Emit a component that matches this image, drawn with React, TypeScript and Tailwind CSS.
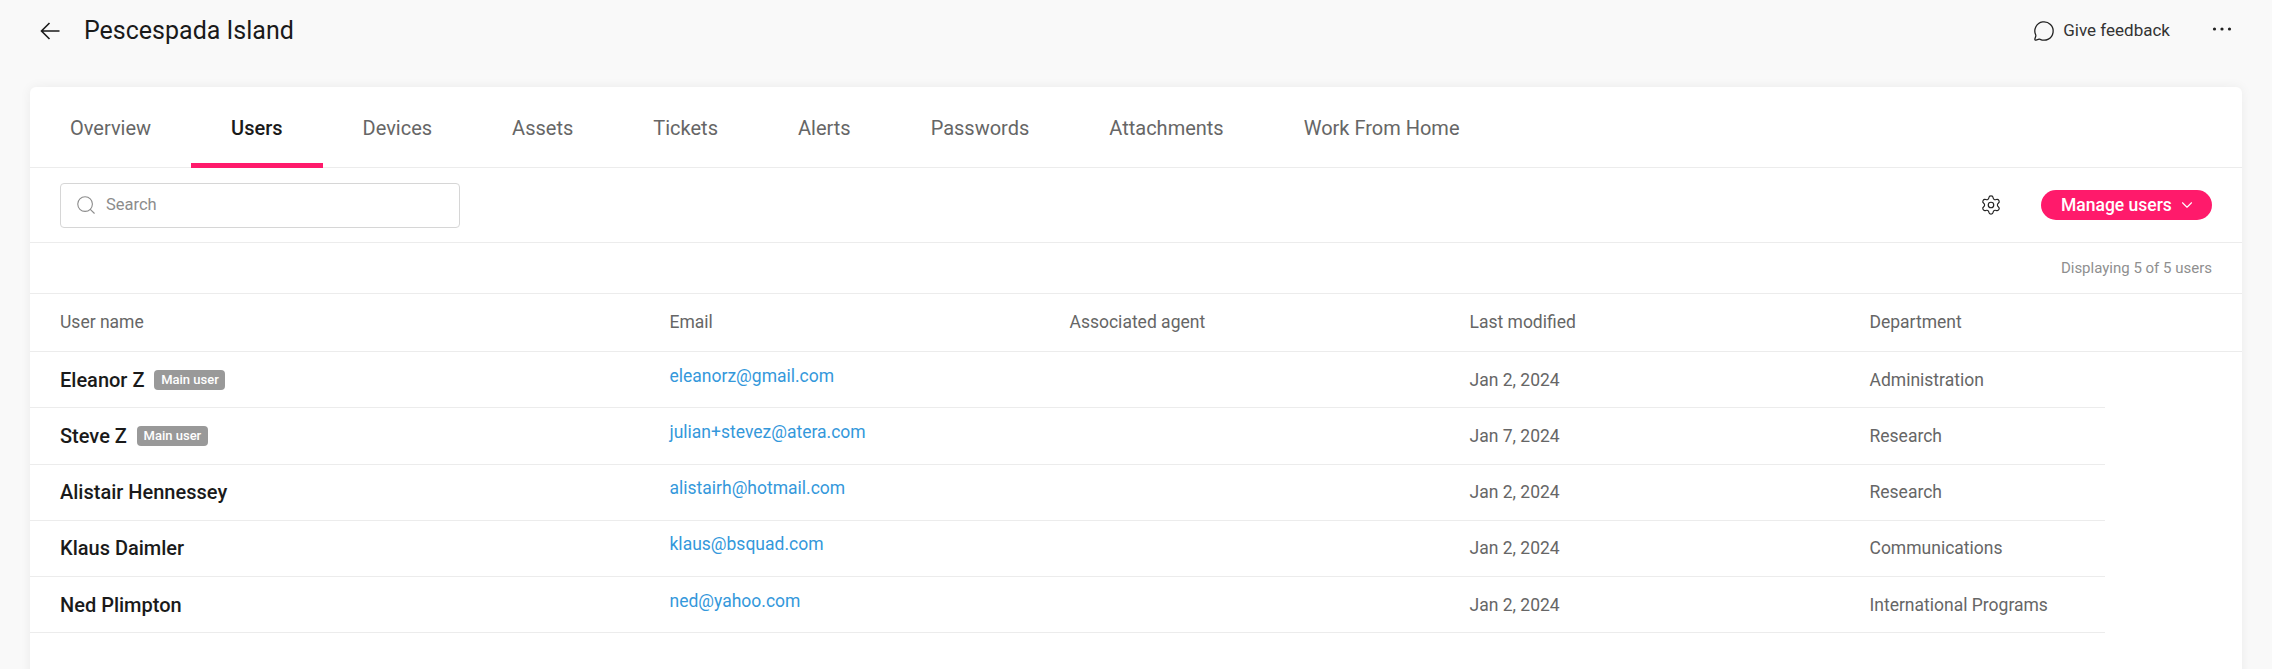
import React from "react";
import { ChevronDown, MessageCircle, Search, Settings } from "lucide-react";

const tabs = ["Overview", "Users", "Devices", "Assets", "Tickets", "Alerts", "Passwords", "Attachments", "Work From Home"];

const users = [
  { name: "Eleanor Z", main: true, email: "eleanorz@gmail.com", modified: "Jan 2, 2024", department: "Administration" },
  { name: "Steve Z", main: true, email: "julian+stevez@atera.com", modified: "Jan 7, 2024", department: "Research" },
  { name: "Alistair Hennessey", main: false, email: "alistairh@hotmail.com", modified: "Jan 2, 2024", department: "Research" },
  { name: "Klaus Daimler", main: false, email: "klaus@bsquad.com", modified: "Jan 2, 2024", department: "Communications" },
  { name: "Ned Plimpton", main: false, email: "ned@yahoo.com", modified: "Jan 2, 2024", department: "International Programs" },
];

const columns = "grid grid-cols-[609.5px_400px_400px_400px_1fr] items-center pl-[30px]";

export default function App() {
  return (
    <div className="h-[669px] overflow-hidden bg-[#f9f9f9] font-['Roboto',sans-serif]">
      {/* page header */}
      <header className="flex h-[61px] items-center justify-between pl-[40px] pr-[40px] pt-[1px]">
        <div className="flex items-center">
          <svg width="20" height="18" viewBox="0 0 20 18" fill="none" stroke="#1a1a1a" strokeWidth="1.6">
            <path d="M19.5 9H1.5M9.5 1L1.5 9l8 8" />
          </svg>
          <h1 className="ml-[24px] text-[25px] text-[#1a1a1a]">Pescespada Island</h1>
        </div>
        <div className="flex items-center">
          <MessageCircle className="h-[22px] w-[22px] text-[#222]" strokeWidth={1.4} />
          <span className="ml-[8px] text-[17px] text-[#333]">Give feedback</span>
          <svg className="mb-[4px] ml-[42px]" width="20" height="6" viewBox="0 0 20 6" fill="#222">
            <circle cx="2.5" cy="3" r="1.6" />
            <circle cx="10" cy="3" r="1.6" />
            <circle cx="17.5" cy="3" r="1.6" />
          </svg>
        </div>
      </header>

      {/* card */}
      <main className="mx-[30px] mt-[26px] h-[600px] rounded-[6px] bg-white shadow-[0_0_12px_rgba(0,0,0,0.06)]">
        <nav className="flex h-[81px] border-b border-[#ececec] pt-[1px]">
          {tabs.map((tab) => (
            <div
              key={tab}
              className={
                tab === "Users"
                  ? "flex h-[80px] items-center border-b-[5px] border-[#ff1a6b] px-[40px] pt-[4px] text-[20px] font-medium text-[#1a1a1a]"
                  : "flex h-[80px] items-center border-b-[5px] border-transparent px-[40px] pt-[4px] text-[20px] text-[#666]"
              }
            >
              {tab}
            </div>
          ))}
        </nav>

        {/* toolbar */}
        <div className="flex h-[75px] items-center justify-between border-b border-[#ececec] pl-[30px] pr-[30px]">
          <div className="flex h-[45px] w-[400px] items-center rounded-[4px] border border-[#d6d6d6] pl-[14px]">
            <Search className="h-[22px] w-[22px] text-[#8c8c8c]" strokeWidth={1.2} />
            <span className="ml-[9px] text-[16.5px] text-[#8c8c8c]">Search</span>
          </div>
          <div className="flex items-center">
            <Settings className="h-[22px] w-[22px] text-[#222]" strokeWidth={1.3} />
            <button className="ml-[39px] flex h-[30px] w-[171px] items-center rounded-full bg-[#ff1a6b] pl-[20px] text-[17.5px] font-medium text-white">
              Manage users
              <ChevronDown className="ml-[6px] h-[18px] w-[18px]" strokeWidth={1.5} />
            </button>
          </div>
        </div>

        <div className="flex h-[51px] items-center justify-end border-b border-[#ececec] pr-[30px] text-[15px] text-[#8f8f8f]">
          Displaying 5 of 5 users
        </div>

        {/* table */}
        <div className={`${columns} h-[58px] border-b border-[#ececec] text-[17.5px] text-[#666]`}>
          <div>User name</div>
          <div>Email</div>
          <div>Associated agent</div>
          <div>Last modified</div>
          <div>Department</div>
        </div>
        <div className="w-[2075px]">
          {users.map((user) => (
            <div key={user.email} className={`${columns} h-[56.25px] border-b border-[#ececec] text-[17.5px] text-[#666]`}>
              <div className="flex items-center">
                <span className="text-[20px] font-medium text-[#1a1a1a]">{user.name}</span>
                {user.main && (
                  <span className="ml-[10px] flex h-[20px] w-[71px] items-center justify-center rounded-[4px] bg-[#999] text-[13px] font-medium text-white">
                    Main user
                  </span>
                )}
              </div>
              <div className="mb-[8px] text-[#3498db]">{user.email}</div>
              <div />
              <div>{user.modified}</div>
              <div>{user.department}</div>
            </div>
          ))}
        </div>
      </main>
    </div>
  );
}
